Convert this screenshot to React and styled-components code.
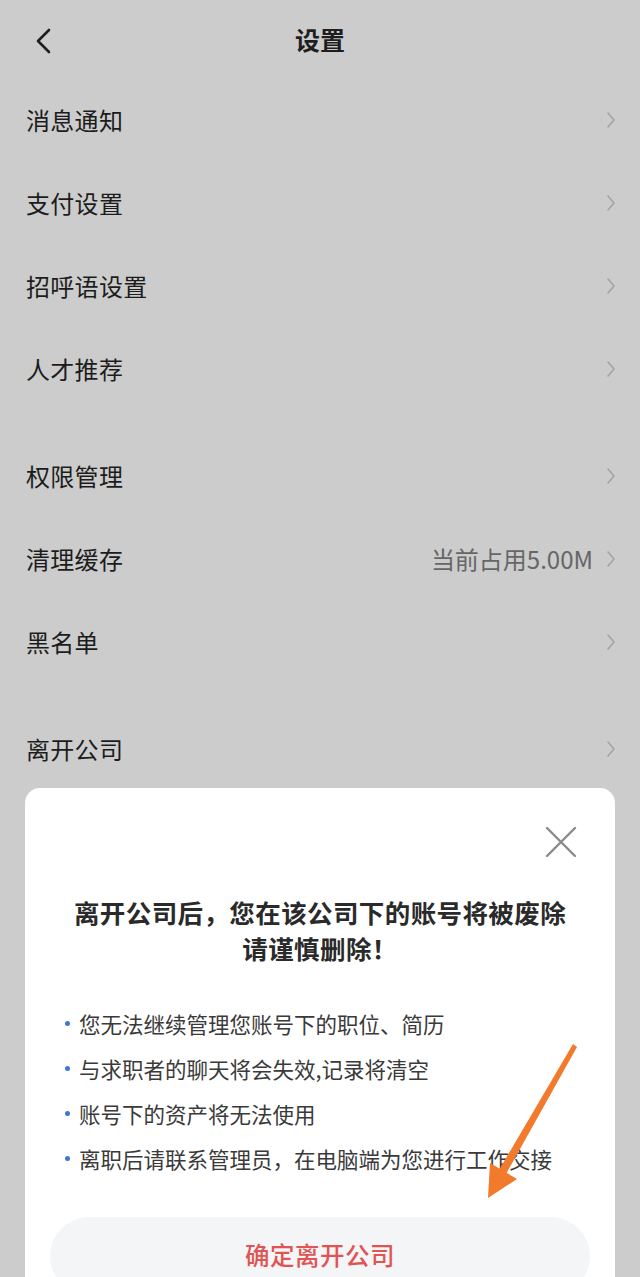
import React from "react";
import styled, { createGlobalStyle } from "styled-components";

const Global = createGlobalStyle`
  html, body { margin: 0; padding: 0; }
  body {
    background: #cccccc;
    font-family: "Noto Sans CJK SC", "Noto Sans", sans-serif;
    color: #1c1c1c;
    overflow: hidden;
  }
`;

const Page = styled.div`
  position: relative;
  width: 640px;
  height: 1277px;
  overflow: hidden;
  background: #cccccc;
`;

const Header = styled.header`
  display: grid;
  grid-template-columns: 1fr auto 1fr;
  align-items: center;
  height: 80px;
`;

const BackBtn = styled.div`
  display: flex;
  align-items: center;
  padding-left: 35px;
  padding-top: 2px;
`;

const Title = styled.h1`
  margin: 0;
  font-size: 25px;
  font-weight: 700;
  color: #1e1e1e;
  line-height: 1;
  padding-bottom: 2px;
`;

const Group = styled.section`
  display: flex;
  flex-direction: column;
  & + & { margin-top: 24px; }
`;

const Row = styled.div`
  display: flex;
  align-items: center;
  height: 83px;
  box-sizing: border-box;
  padding: 0 24px 4px 26px;
`;

const Label = styled.span`
  flex: 1;
  font-size: 24px;
  color: #1c1c1c;
  letter-spacing: 0.3px;
`;

const Value = styled.span`
  font-size: 24px;
  color: #666;
  margin-right: 13px;
`;

const Modal = styled.div`
  position: absolute;
  top: 788px;
  left: 25px;
  right: 25px;
  bottom: -40px;
  background: #fff;
  border-radius: 15px;
  display: flex;
  flex-direction: column;
`;

const CloseRow = styled.div`
  display: flex;
  justify-content: flex-end;
  padding: 38px 38px 0 0;
`;

const ModalTitle = styled.h2`
  margin: 36px 0 0;
  text-align: center;
  font-size: 25.5px;
  line-height: 36px;
  font-weight: 700;
  color: #2a2a2a;
  letter-spacing: 0.4px;
`;

const List = styled.ul`
  list-style: none;
  margin: 35px 0 0;
  padding: 0 0 0 40px;
`;

const Item = styled.li`
  display: flex;
  align-items: center;
  height: 45px;
  font-size: 21.5px;
  color: #3a3a3a;
  &::before {
    content: "";
    width: 5px;
    height: 5px;
    border-radius: 50%;
    background: #3b78d6;
    margin-right: 9px;
    flex: none;
  }
`;

const ConfirmBtn = styled.button`
  margin: 36px 25px 0;
  height: 78px;
  box-sizing: border-box;
  padding: 0 0 4px;
  border: none;
  border-radius: 39px;
  background: #f4f5f7;
  color: #e05454;
  font-family: inherit;
  font-size: 24.5px;
  font-weight: 500;
  letter-spacing: 0.5px;
  flex: none;
`;

const ArrowSvg = styled.svg`
  position: absolute;
  left: 0;
  top: 0;
  pointer-events: none;
`;

const Chevron = () => (
  <svg width="10" height="18" viewBox="0 0 10 18">
    <path d="M2 2 L8 9 L2 16" fill="none" stroke="#a3a3a3" strokeWidth="1.6" strokeLinecap="round" strokeLinejoin="round" />
  </svg>
);

const SettingRow = ({ label, value }) => (
  <Row>
    <Label>{label}</Label>
    {value && <Value>{value}</Value>}
    <Chevron />
  </Row>
);

export default function App() {
  return (
    <Page>
      <Global />
      <Header>
        <BackBtn>
          <svg width="16" height="26" viewBox="0 0 16 26">
            <path d="M14 2 L3 13 L14 24" fill="none" stroke="#1e1e1e" strokeWidth="2.6" strokeLinecap="round" strokeLinejoin="round" />
          </svg>
        </BackBtn>
        <Title>设置</Title>
        <div />
      </Header>
      <Group>
        <SettingRow label="消息通知" />
        <SettingRow label="支付设置" />
        <SettingRow label="招呼语设置" />
        <SettingRow label="人才推荐" />
      </Group>
      <Group>
        <SettingRow label="权限管理" />
        <SettingRow label="清理缓存" value="当前占用5.00M" />
        <SettingRow label="黑名单" />
      </Group>
      <Group>
        <SettingRow label="离开公司" />
      </Group>

      <Modal>
        <CloseRow>
          <svg width="32" height="32" viewBox="0 0 32 32">
            <path d="M2 2 L30 30 M30 2 L2 30" stroke="#8a8a8a" strokeWidth="2.4" strokeLinecap="round" />
          </svg>
        </CloseRow>
        <ModalTitle>
          离开公司后，您在该公司下的账号将被废除
          <br />
          请谨慎删除！
        </ModalTitle>
        <List>
          <Item>您无法继续管理您账号下的职位、简历</Item>
          <Item>与求职者的聊天将会失效,记录将清空</Item>
          <Item>账号下的资产将无法使用</Item>
          <Item>离职后请联系管理员，在电脑端为您进行工作交接</Item>
        </List>
        <ConfirmBtn>确定离开公司</ConfirmBtn>
      </Modal>

      <ArrowSvg width="640" height="1277" viewBox="0 0 640 1277">
        <polygon points="573,1044 577,1047 506,1174 499,1170" fill="#f27a2c" />
        <polygon points="488,1198 490,1163 517,1179" fill="#f27a2c" />
      </ArrowSvg>
    </Page>
  );
}
